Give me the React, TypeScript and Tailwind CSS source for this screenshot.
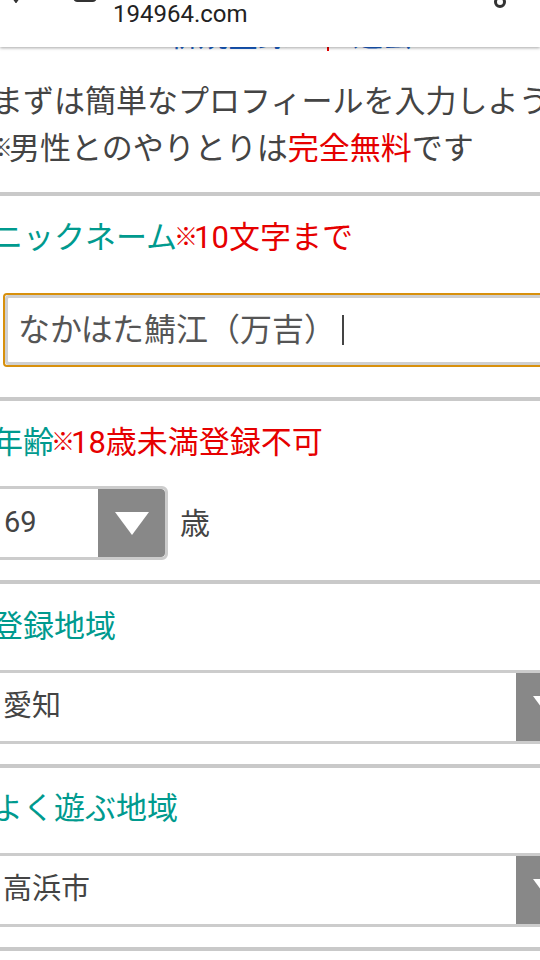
import { useState } from 'react';

function Triangle() {
  return (
    <svg width="34" height="23" viewBox="0 0 34 23">
      <path d="M0 0 H34 L17 23 Z" fill="#ffffff" />
    </svg>
  );
}

// small reference mark, narrower than a full-width glyph
function Mark() {
  return (
    <span className="-ml-[3px] font-['Noto_Sans_CJK_JP',sans-serif] text-[24px] leading-none font-bold tracking-[-4px] align-[3px]">
      ※
    </span>
  );
}

function AgeSelect({ value }: { value: string }) {
  return (
    <div className="flex h-[74px] w-[176px] rounded-[6px] border-[3px] border-[#cccccc] bg-white overflow-hidden">
      <div className="flex flex-1 items-center pl-[9px] text-[29px] text-[#444]">{value}</div>
      <div className="flex w-[67px] items-center justify-center rounded-r-[4px] bg-[#888888]">
        <Triangle />
      </div>
    </div>
  );
}

function WideSelect({ value }: { value: string }) {
  return (
    <div className="flex h-[74px] w-[594px] rounded-[6px] border-[3px] border-[#cccccc] bg-white overflow-hidden">
      <div className="flex flex-1 items-center pl-[8px] text-[29px] text-[#444]">{value}</div>
      <div className="flex w-[67px] items-center justify-center rounded-r-[4px] bg-[#888888]">
        <Triangle />
      </div>
    </div>
  );
}

export default function App() {
  const [nickname] = useState('なかはた鯖江（万吉）');

  return (
    <div className="w-[540px] h-[960px] overflow-hidden bg-white font-[Roboto,'Noto_Sans_CJK_JP',sans-serif]">
      {/* browser bar */}
      <div className="relative z-10 flex h-[47px] items-start overflow-hidden bg-white shadow-[0_1px_3px_rgba(0,0,0,0.35)]">
        <svg className="ml-[6px] -mt-[11px] shrink-0" width="20" height="14" viewBox="0 0 20 14">
          <path d="M3 2 L10 12 L17 2" fill="none" stroke="#333" strokeWidth="3" />
        </svg>
        <svg className="ml-[47px] -mt-[18px] shrink-0" width="24" height="20" viewBox="0 0 24 20">
          <rect x="1.5" y="1.5" width="21" height="17" rx="3" fill="none" stroke="#333" strokeWidth="3" />
        </svg>
        <div className="ml-[16px] mt-[2px] text-[24px] leading-[24px] text-[#222]">194964.com</div>
        <div className="flex-1" />
        <svg className="mr-[33px] -mt-[5px] shrink-0" width="14" height="14" viewBox="0 0 14 14">
          <circle cx="7" cy="7" r="4.5" fill="none" stroke="#333" strokeWidth="3" />
        </svg>
      </div>

      <div className="-ml-[8px] w-[594px]">
        {/* links scrolled under the bar */}
        <div className="flex h-[4px] items-end overflow-hidden text-[30px] leading-none">
          <span className="ml-[176px] text-[#1a5fc8]">新規登録</span>
          <span className="ml-[39px] h-[6px] w-[2px] self-end bg-[#e60000]" />
          <span className="ml-[24px] text-[#1a5fc8]">退会</span>
        </div>

        {/* intro */}
        <div className="h-[141px] pt-[27px] text-[31px] leading-[47px] text-[#444] whitespace-nowrap">
          <p>まずは簡単なプロフィールを入力しよう</p>
          <p>
            <Mark />男性とのやりとりは<span className="text-[#e60000]">完全無料</span>です
          </p>
        </div>

        {/* nickname */}
        <section className="border-t-[4px] border-[#c9c9c9] pt-[22px] pb-[30px]">
          <h2 className="h-[40px] text-[31px] leading-[40px] text-[#009a8e]">
            ニックネーム
            <span className="text-[#e60000]">
              <Mark />10文字まで
            </span>
          </h2>
          <div className="mt-[35px] ml-[11px] h-[74px] w-[580px] rounded-[4px] border-2 border-[#d8900c]">
            <div className="flex h-full items-center rounded-[4px] border-[3px] border-[#cfcfcf] bg-white pl-[10px] text-[32px] text-[#555]">
              <span>{nickname}</span>
              <span className="ml-[6px] h-[30px] w-[2px] bg-[#444]" />
            </div>
          </div>
        </section>

        {/* age */}
        <section className="border-t-[4px] border-[#c9c9c9] pt-[22px] pb-[20px]">
          <h2 className="h-[40px] text-[31px] leading-[40px] text-[#009a8e]">
            年齢
            <span className="text-[#e60000]">
              <Mark />18歳未満登録不可
            </span>
          </h2>
          <div className="mt-[23px] flex items-center gap-[12px]">
            <AgeSelect value="69" />
            <span className="text-[30px] text-[#444]">歳</span>
          </div>
        </section>

        {/* region */}
        <section className="border-t-[4px] border-[#c9c9c9] pt-[23px] pb-[20px]">
          <h2 className="h-[40px] text-[31px] leading-[40px] text-[#009a8e]">登録地域</h2>
          <div className="mt-[23px]">
            <WideSelect value="愛知" />
          </div>
        </section>

        {/* play area */}
        <section className="border-t-[4px] border-[#c9c9c9] pt-[21px] pb-[20px]">
          <h2 className="h-[40px] text-[31px] leading-[40px] text-[#009a8e]">よく遊ぶ地域</h2>
          <div className="mt-[24px]">
            <WideSelect value="高浜市" />
          </div>
        </section>

        <section className="h-[40px] border-t-[4px] border-[#c9c9c9]" />
      </div>
    </div>
  );
}
